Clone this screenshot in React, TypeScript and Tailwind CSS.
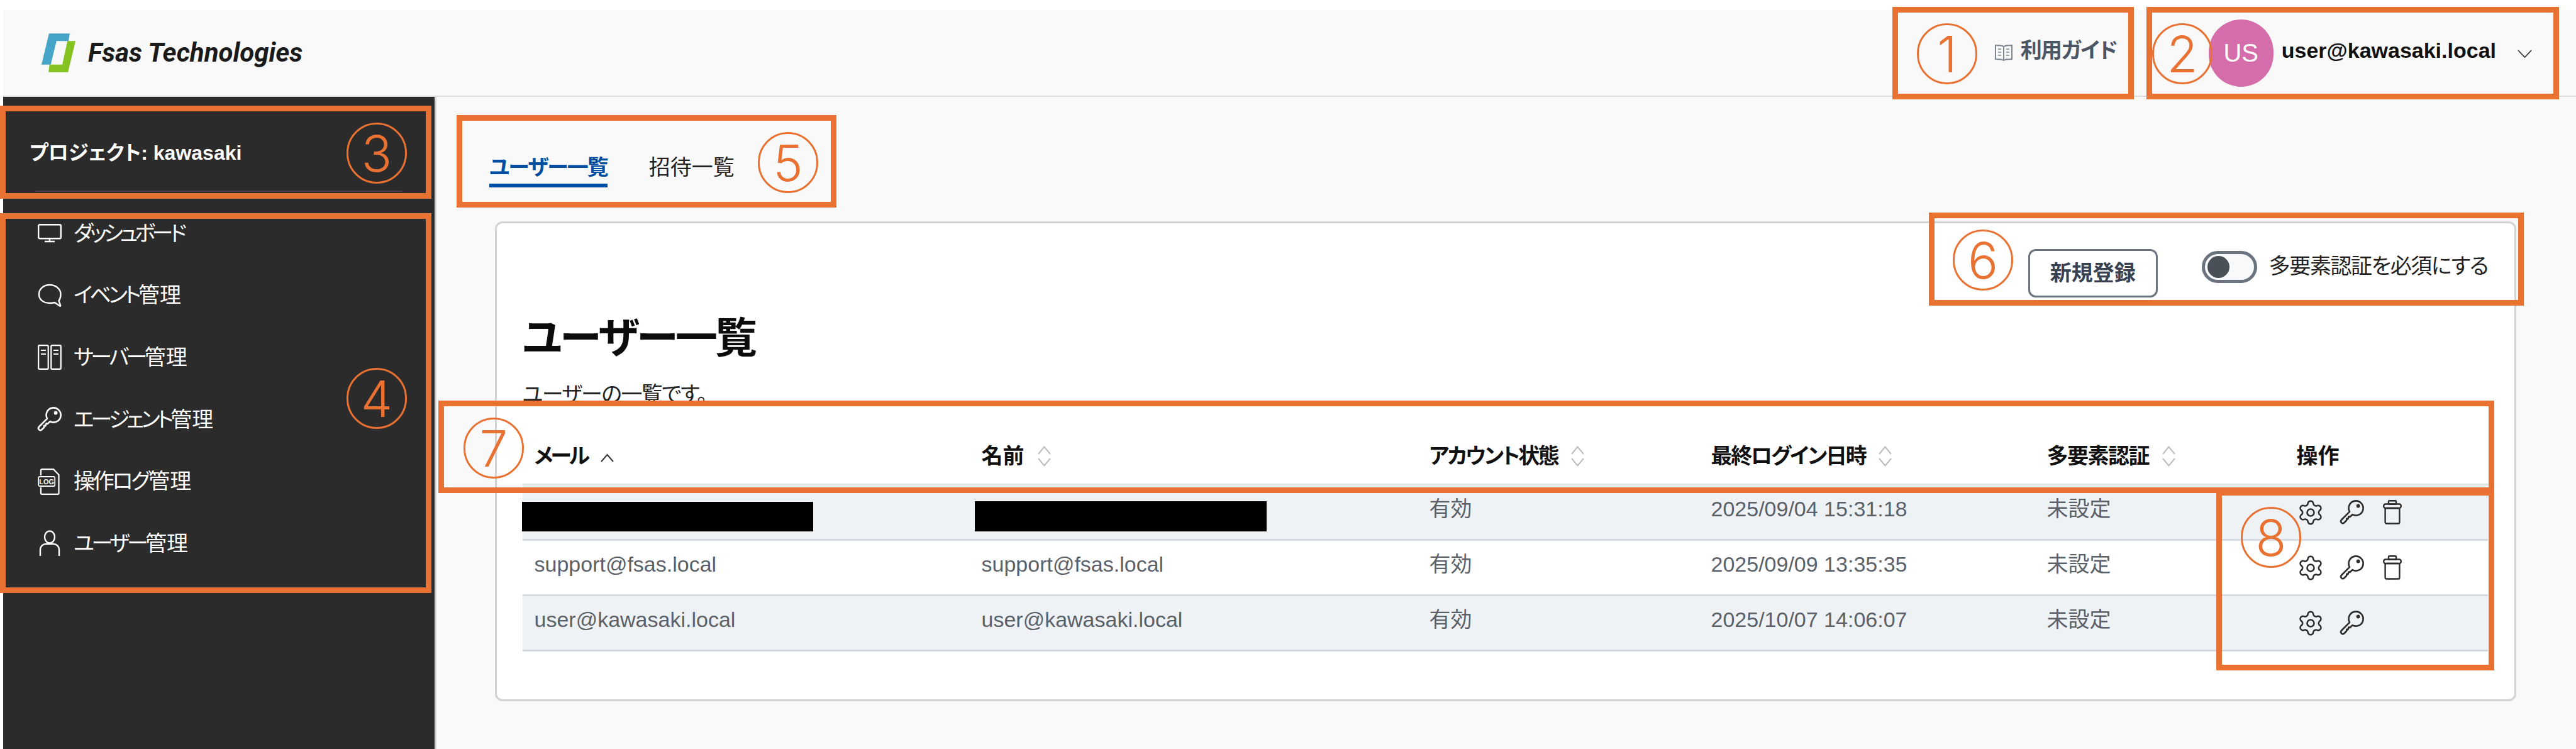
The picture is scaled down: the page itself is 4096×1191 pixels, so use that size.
import { Settings } from 'lucide-react';

function Logo() {
  return (
    <svg width="55" height="62" viewBox="0 0 60 67" className="shrink-0">
      <polygon points="13,0 49,0 47,13 26,13 16,54 0,54" fill="#45a5c8" />
      <polygon points="45,13 59,13 46,67 12,67 14,54 36,54" fill="#84c31f" />
    </svg>
  );
}

function BookIcon() {
  return (
    <svg width="30" height="30" viewBox="0 0 30 30" fill="none" stroke="#7b8590" strokeWidth="2" className="shrink-0">
      <path d="M15 5 C12 3 6 3 2 3 V25 C6 25 12 25 15 27 C18 25 24 25 28 25 V3 C24 3 18 3 15 5 Z M15 5 V27" />
      <path d="M6 9 H11 M6 14 H11 M6 19 H11 M19 9 H24 M19 14 H24 M19 19 H24" strokeWidth="1.6" />
    </svg>
  );
}

function MonitorIcon() {
  return (
    <svg width="38" height="30" viewBox="0 0 38 30" fill="none" stroke="white" strokeWidth="2.4">
      <rect x="1.2" y="1.2" width="35.6" height="22" rx="2" />
      <path d="M19 23 V27 M11 28 H27" />
    </svg>
  );
}

function BubbleIcon() {
  return (
    <svg width="38" height="38" viewBox="0 0 38 38" fill="none" stroke="white" strokeWidth="2.4">
      <path d="M19 2 C9 2 2 8.5 2 17 C2 25.5 9 31 19 31 C22 31 25 30.6 27 30 L35 35.5 C36 36 36.6 35.3 36 34 L33.5 27.5 C35.5 24.5 36.5 21 36.5 17 C36.5 8.5 29 2 19 2 Z" />
    </svg>
  );
}

function ServerIcon() {
  return (
    <svg width="38" height="40" viewBox="0 0 38 40" fill="none" stroke="white" strokeWidth="2.2">
      <rect x="1.2" y="1.2" width="15.5" height="37.6" rx="1.5" />
      <rect x="21.3" y="1.2" width="15.5" height="37.6" rx="1.5" />
      <path d="M5 9 H13 M5 15 H13 M25 9 H33 M25 15 H33" strokeWidth="1.8" />
    </svg>
  );
}

function KeyIcon({ color, size }: { color: string; size: number }) {
  return (
    <svg width={size} height={size} viewBox="0 0 24 24" fill="none" stroke={color} strokeWidth="1.5" strokeLinejoin="round" className="shrink-0">
      <path d="M9.73 11.23 A6.6 6.6 0 1 1 12.27 13.77 L10 16 L9 15.6 L8.2 17.8 L7 17.6 L7 19 L4.77 21.27 A1.8 1.8 0 0 1 2.23 18.73 Z" />
      <circle cx="17.5" cy="6" r="0.9" fill={color} />
    </svg>
  );
}

function LogIcon() {
  return (
    <svg width="38" height="42" viewBox="0 0 38 42" fill="none" stroke="white" strokeWidth="2.2">
      <path d="M5 11 V3 C5 2 6 1.2 7 1.2 H25 L33.5 10 V39 C33.5 40 32.5 40.8 31.5 40.8 H7 C6 40.8 5 40 5 39 V30" />
      <rect x="1.2" y="13" width="26" height="15" rx="2" strokeWidth="1.8" />
      <text x="14.2" y="25" textAnchor="middle" fontSize="11" fontWeight="700" fill="white" stroke="none" fontFamily="Liberation Sans">LOG</text>
    </svg>
  );
}

function UserIcon() {
  return (
    <svg width="38" height="42" viewBox="0 0 38 42" fill="none" stroke="white" strokeWidth="2.4">
      <ellipse cx="19" cy="11" rx="8" ry="9.5" />
      <path d="M4 41 V31 C4 26 8 22 13 22 H25 C30 22 34 26 34 31 V41" />
    </svg>
  );
}

function TrashIcon() {
  return (
    <svg width="30" height="39" viewBox="0 0 30 39" fill="none" stroke="#2b2b2b" strokeWidth="2.4" className="shrink-0">
      <rect x="9" y="1.2" width="12" height="5.5" rx="1.2" />
      <rect x="1.2" y="6.5" width="27.6" height="6.5" rx="3" />
      <rect x="3.6" y="13" width="22.8" height="24.5" rx="2" />
    </svg>
  );
}

function SortIcon() {
  return (
    <svg width="23" height="33" viewBox="0 0 23 33" fill="none" stroke="#bdbdbd" strokeWidth="2" className="shrink-0">
      <path d="M2 13 L11.5 1.5 L21 13 M2 20 L11.5 31.5 L21 20" />
    </svg>
  );
}

const navItems = [
  { kana: 'ダッシュボード', kanji: '', tracking: 'tracking-[-5.2px]', icon: <MonitorIcon /> },
  { kana: 'イベント', kanji: '管理', tracking: 'tracking-[-4.5px]', icon: <BubbleIcon /> },
  { kana: 'サーバー', kanji: '管理', tracking: 'tracking-[-4.5px]', icon: <ServerIcon /> },
  { kana: 'エージェント', kanji: '管理', tracking: 'tracking-[-4.8px]', icon: <KeyIcon color="white" size={42} /> },
  { kana: '操作ログ', kanji: '管理', tracking: 'tracking-[-3.2px]', icon: <LogIcon /> },
  { kana: 'ユーザー', kanji: '管理', tracking: 'tracking-[-4.5px]', icon: <UserIcon /> },
];

const sortColumns = [
  { label: '名前', tracking: '' },
  { label: 'アカウント状態', tracking: 'tracking-[-2.6px]' },
  { label: '最終ログイン日時', tracking: 'tracking-[-2.3px]' },
  { label: '多要素認証', tracking: 'tracking-[-1.5px]' },
];

const rows = [
  { mail: '', name: '', login: '2025/09/04 15:31:18', canDelete: true, striped: true },
  { mail: 'support@fsas.local', name: 'support@fsas.local', login: '2025/09/09 13:35:35', canDelete: true, striped: false },
  { mail: 'user@kawasaki.local', name: 'user@kawasaki.local', login: '2025/10/07 14:06:07', canDelete: false, striped: true },
];

const gridCols = 'grid grid-cols-[711px_712px_448px_534px_397px_323px]';

function Header() {
  return (
    <header className="h-[138px] bg-[#f9f9f9] border-b-2 border-[#dcdcdc] flex items-center justify-between pl-[61px] pr-[70px]">
      <div className="flex items-center gap-[19px]">
        <Logo />
        <span className="text-[42px] font-bold italic text-[#1a1a1a] font-['Roboto',sans-serif] mb-[2px]">Fsas Technologies</span>
      </div>
      <div className="flex items-center">
        <BookIcon />
        <span className="ml-[12px] text-[34px] leading-[51px] font-semibold tracking-[-1.5px] text-[#4b5563] mb-[7px]">利用ガイド</span>
        <div className="ml-[146px] w-[103px] h-[107px] rounded-full bg-[#d66dab] text-white text-[40px] flex items-center justify-center">US</div>
        <span className="ml-[13px] text-[34px] leading-[51px] font-bold text-[#111] mb-[7px]">user@kawasaki.local</span>
        <svg width="23" height="13" viewBox="0 0 23 13" fill="none" stroke="#333" strokeWidth="1.8" className="ml-[34px] mt-[3px]">
          <path d="M1 1 L11.5 12 L22 1" />
        </svg>
      </div>
    </header>
  );
}

function Sidebar() {
  return (
    <aside className="w-[689px] shrink-0 bg-[#2b2b2b] border-r-[3px] border-[#d4d4d4]">
      <div className="pl-[42px] pt-[65px] h-[149px] text-[32px] leading-[48px] font-bold text-white">プロジェクト: kawasaki</div>
      <div className="mx-[52px] h-[2px] bg-[#444]" />
      <nav className="mt-[17px]">
        {navItems.map((item) => (
          <div key={item.kana} className="h-[98.6px] flex items-center pl-[55px] gap-[19px] text-white text-[34px]">
            <div className="w-[38px] flex justify-center">{item.icon}</div>
            <span>
              <span className={item.tracking}>{item.kana}</span>
              {item.kanji}
            </span>
          </div>
        ))}
      </nav>
    </aside>
  );
}

function Tabs() {
  return (
    <div className="flex gap-[66px] pl-[84px] pt-[87px] text-[34px] leading-[51px]">
      <div className="border-b-[6px] border-[#004ea2] text-[#004ea2] font-semibold tracking-[-2px]">ユーザー一覧</div>
      <div className="text-[#222]">招待一覧</div>
    </div>
  );
}

function UserTable() {
  return (
    <div className="text-[34px] leading-[51px]">
      <div className={`${gridCols} h-[119px] pt-[47px] border-b-[3px] border-[#e2e2e2] font-bold text-[#111]`}>
        <div className="flex items-start gap-[20px] pl-[19px]">
          <span className="tracking-[-4px]">メール</span>
          <svg width="23" height="14" viewBox="0 0 23 14" fill="none" stroke="#333" strokeWidth="2" className="mt-[21px]">
            <path d="M2 13 L11.5 2 L21 13" />
          </svg>
        </div>
        {sortColumns.map((col) => (
          <div key={col.label} className="flex items-center gap-[20px] pl-[19px] h-[51px]">
            <span className={col.tracking}>{col.label}</span>
            <SortIcon />
          </div>
        ))}
        <div className="pl-[19px]">操作</div>
      </div>
      {rows.map((row) => (
        <div key={row.login} className={`${gridCols} h-[88px] border-b-[3px] border-[#d5dae0] text-[#5b6168] ${row.striped ? 'bg-[#eff2f5]' : 'bg-white'}`}>
          <div className="pl-[19px] pt-[12px]">{row.mail}</div>
          <div className="pl-[19px] pt-[12px]">{row.name}</div>
          <div className="pl-[19px] pt-[12px]">有効</div>
          <div className="pl-[19px] pt-[12px]">{row.login}</div>
          <div className="pl-[19px] pt-[12px]">未設定</div>
          <div className="pl-[19px] flex items-center">
            <Settings size={44} strokeWidth={1.4} color="#2b2b2b" className="shrink-0" />
            <div className="ml-[23px]">
              <KeyIcon color="#2b2b2b" size={42} />
            </div>
            {row.canDelete && (
              <div className="ml-[28px]">
                <TrashIcon />
              </div>
            )}
          </div>
        </div>
      ))}
    </div>
  );
}

function Card() {
  return (
    <div className="mt-[54px] ml-[92.5px] mr-[95px] h-[763px] bg-white border-[3px] border-[#d2d2d2] rounded-[12px] pl-[41px] pr-[42px] pt-[41px]">
      <div className="flex justify-end items-start h-[77px]">
        <button className="w-[206px] h-[77px] border-[3px] border-[#6b7280] rounded-[12px] bg-white text-[34px] font-semibold text-[#374151]">新規登録</button>
        <div className="ml-[70px] mt-[2px] flex items-center gap-[19px] text-[34px] leading-[51px] text-[#222]">
          <div className="w-[88px] h-[51px] rounded-full border-[5px] border-[#6b7280] bg-[#f8f9fa] flex items-center pl-[4px]">
            <div className="w-[35px] h-[35px] rounded-full bg-[#495057]" />
          </div>
          <span className="mb-[2px] tracking-[-1.4px]">多要素認証を必須にする</span>
        </div>
      </div>
      <h1 className="mt-[15px] text-[67px] leading-[100px] font-bold tracking-[-4px] text-[#0c0c0c]">ユーザー一覧</h1>
      <p className="mt-[14px] text-[34px] leading-[51px] tracking-[-1.6px] text-[#222]">ユーザーの一覧です。</p>
      <UserTable />
    </div>
  );
}

function Marker({ className }: { className: string }) {
  return <div className={`absolute border-[9px] border-[#e97132] ${className}`} />;
}

function Badge({ n, className }: { n: number; className: string }) {
  return (
    <div className={`absolute w-[96px] h-[97px] rounded-full border-[3px] border-[#e97132] text-[#e97132] flex items-center justify-center text-[80px] leading-none font-light font-['Inter',sans-serif] ${className}`}>
      {n}
    </div>
  );
}

export default function App() {
  return (
    <div className="relative w-[4096px] h-[1191px] overflow-hidden bg-white pt-[16px] pl-[5px] font-['Liberation_Sans','Noto_Sans_CJK_JP',sans-serif] [font-feature-settings:'palt']">
      <Header />
      <div className="flex h-[1037px]">
        <Sidebar />
        <main className="flex-1 bg-[#f9f9f9]">
          <Tabs />
          <Card />
        </main>
      </div>

      {/* 黒塗り */}
      <div className="absolute left-[829.5px] top-[798px] w-[463px] h-[47px] bg-black" />
      <div className="absolute left-[1550px] top-[797px] w-[464px] h-[48px] bg-black" />

      {/* 説明用の枠と番号 */}
      <Marker className="left-[3009px] top-[11px] w-[384px] h-[147px]" />
      <Marker className="left-[3413px] top-[11px] w-[656px] h-[147px]" />
      <Marker className="left-0 top-[168px] w-[686px] h-[148px]" />
      <Marker className="left-0 top-[339px] w-[686px] h-[604px]" />
      <Marker className="left-[726px] top-[183px] w-[604px] h-[147px]" />
      <Marker className="left-[3067px] top-[338px] w-[946px] h-[148px]" />
      <Marker className="left-[697px] top-[637px] w-[3269px] h-[147px]" />
      <Marker className="left-[3524px] top-[779px] w-[442px] h-[287px]" />
      <Badge n={1} className="left-[3048px] top-[37px]" />
      <Badge n={2} className="left-[3422px] top-[37px]" />
      <Badge n={3} className="left-[551px] top-[195px]" />
      <Badge n={4} className="left-[551px] top-[585px]" />
      <Badge n={5} className="left-[1205px] top-[210px]" />
      <Badge n={6} className="left-[3105px] top-[365px]" />
      <Badge n={7} className="left-[737px] top-[664px]" />
      <Badge n={8} className="left-[3563px] top-[806px]" />
    </div>
  );
}
